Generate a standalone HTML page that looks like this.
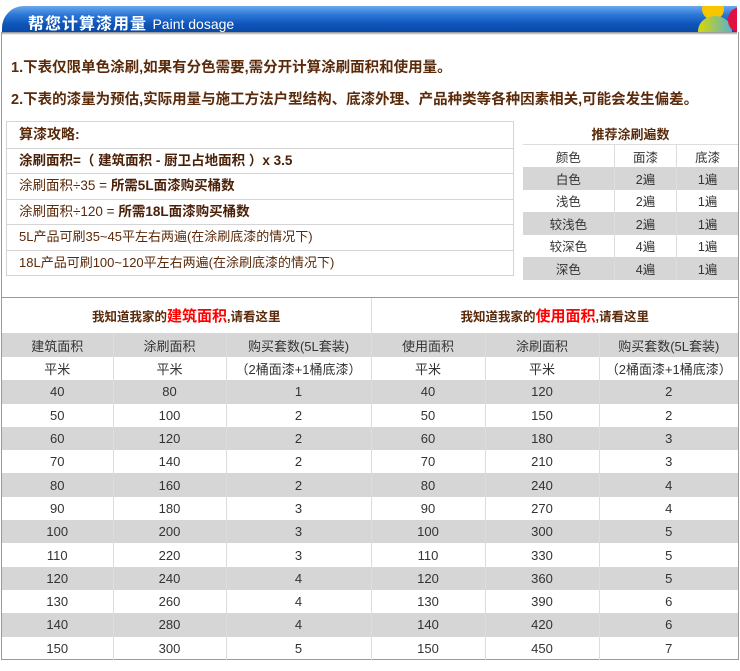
<!DOCTYPE html>
<html><head><meta charset="utf-8"><style>
*{margin:0;padding:0;box-sizing:border-box}
body{width:740px;height:671px;background:#fff;position:relative;overflow:hidden;font-family:"Liberation Sans","Noto Sans CJK SC",sans-serif}
.ban{position:absolute;left:2px;top:6px;width:735px;height:26px;border-radius:22px 0 0 0;background:linear-gradient(#6aa8ec 0%,#2a76d6 35%,#0e55b8 70%,#0a4aa8 100%);overflow:hidden}
.ban .t{position:absolute;left:26px;top:4px;color:#fff;font-size:16px;font-weight:bold;letter-spacing:1px}
.ban .t span{font-weight:normal;font-size:14px;letter-spacing:0}
.frame{position:absolute;left:1px;top:32px;width:738px;height:628px;border-left:1px solid #999;border-right:1px solid #999;border-bottom:1px solid #999}
.shadow{position:absolute;left:2px;top:32px;width:735px;height:3px;background:linear-gradient(#888,#fff)}
.note{position:absolute;left:11px;color:#5a2a0a;font-size:14.5px;font-weight:bold;white-space:nowrap}
.lb{position:absolute;left:6px;top:121px;width:508px;border:1px solid #d4d4d4}
.lb div{height:25.4px;border-top:1px solid #d4d4d4;padding-left:12px;font-size:13.5px;color:#5a2a0a;line-height:24px;white-space:nowrap}
.lb div:first-child{border-top:0;height:26px;font-weight:bold;font-size:14px}
.lb b{color:#4a2008}
.rt{position:absolute;left:523px;top:122px;width:215px;border-collapse:collapse;font-size:12.5px;color:#333}
.rt td{height:22.5px;text-align:center;border-left:1px solid #ddd}
.rt td:first-child{border-left:0}
.rt .h td{font-weight:bold;color:#5a2a0a;font-size:13px;border-bottom:1px solid #ddd}
.g td{background:#d6d6d6}
.hl{position:absolute;left:2px;top:297px;width:736px;height:1px;background:#999}
.bt{position:absolute;left:2px;top:298px;width:736px;border-collapse:collapse;font-size:13px;color:#333;table-layout:fixed}
.bt td{text-align:center;border-left:1px solid #ddd;height:23.3px;padding:0}
.bt td:first-child{border-left:0}
.bt .tt td{height:35px;color:#5a2a0a;font-size:12.5px;font-weight:bold}
.bt .tt em{font-style:normal;color:#f00;font-size:15px}
.bt .hd td{background:#d6d6d6;height:24px;font-size:13px}
</style></head><body>
<div class="ban"><div class="t">帮您计算漆用量 <span>Paint dosage</span></div>
<div style="position:absolute;left:700px;top:-8px;width:22px;height:22px;border-radius:50%;background:#f7c600"></div>
<div style="position:absolute;left:696px;top:10px;width:34px;height:30px;border-radius:50%;background:linear-gradient(90deg,#d8d800,#5ab0d0)"></div>
<div style="position:absolute;left:726px;top:2px;width:20px;height:24px;border-radius:50%;background:#e01040"></div>
</div>
<div class="frame"></div><div class="shadow"></div>
<div class="note" style="top:56px">1.下表仅限单色涂刷,如果有分色需要,需分开计算涂刷面积和使用量。</div>
<div class="note" style="top:88px">2.下表的漆量为预估,实际用量与施工方法户型结构、底漆外理、产品种类等各种因素相关,可能会发生偏差。</div>
<div class="lb">
<div>算漆攻略:</div>
<div><b>涂刷面积=（ 建筑面积 - 厨卫占地面积 ）x 3.5</b></div>
<div>涂刷面积÷35 = <b>所需5L面漆购买桶数</b></div>
<div>涂刷面积÷120 = <b>所需18L面漆购买桶数</b></div>
<div style="font-size:13px">5L产品可刷35~45平左右两遍(在涂刷底漆的情况下)</div>
<div style="font-size:13px">18L产品可刷100~120平左右两遍(在涂刷底漆的情况下)</div>
</div>
<table class="rt">
<tr class="h"><td colspan="3" style="border-left:0">推荐涂刷遍数</td></tr>
<tr><td>颜色</td><td>面漆</td><td>底漆</td></tr>
<tr class="g"><td>白色</td><td>2遍</td><td>1遍</td></tr>
<tr><td>浅色</td><td>2遍</td><td>1遍</td></tr>
<tr class="g"><td>较浅色</td><td>2遍</td><td>1遍</td></tr>
<tr><td>较深色</td><td>4遍</td><td>1遍</td></tr>
<tr class="g"><td>深色</td><td>4遍</td><td>1遍</td></tr>
</table>
<div class="hl"></div>
<table class="bt">
<colgroup><col style="width:111px"><col style="width:113px"><col style="width:145px"><col style="width:114px"><col style="width:114px"><col style="width:139px"></colgroup>
<tr class="tt"><td colspan="3">我知道我家的<em>建筑面积</em>,请看这里</td><td colspan="3">我知道我家的<em>使用面积</em>,请看这里</td></tr>
<tr class="hd"><td>建筑面积</td><td>涂刷面积</td><td>购买套数(5L套装)</td><td>使用面积</td><td>涂刷面积</td><td>购买套数(5L套装)</td></tr>
<tr><td>平米</td><td>平米</td><td>（2桶面漆+1桶底漆）</td><td>平米</td><td>平米</td><td>（2桶面漆+1桶底漆）</td></tr>
<tr class="g"><td>40</td><td>80</td><td>1</td><td>40</td><td>120</td><td>2</td></tr>
<tr><td>50</td><td>100</td><td>2</td><td>50</td><td>150</td><td>2</td></tr>
<tr class="g"><td>60</td><td>120</td><td>2</td><td>60</td><td>180</td><td>3</td></tr>
<tr><td>70</td><td>140</td><td>2</td><td>70</td><td>210</td><td>3</td></tr>
<tr class="g"><td>80</td><td>160</td><td>2</td><td>80</td><td>240</td><td>4</td></tr>
<tr><td>90</td><td>180</td><td>3</td><td>90</td><td>270</td><td>4</td></tr>
<tr class="g"><td>100</td><td>200</td><td>3</td><td>100</td><td>300</td><td>5</td></tr>
<tr><td>110</td><td>220</td><td>3</td><td>110</td><td>330</td><td>5</td></tr>
<tr class="g"><td>120</td><td>240</td><td>4</td><td>120</td><td>360</td><td>5</td></tr>
<tr><td>130</td><td>260</td><td>4</td><td>130</td><td>390</td><td>6</td></tr>
<tr class="g"><td>140</td><td>280</td><td>4</td><td>140</td><td>420</td><td>6</td></tr>
<tr><td>150</td><td>300</td><td>5</td><td>150</td><td>450</td><td>7</td></tr>
</table>
</body></html>
